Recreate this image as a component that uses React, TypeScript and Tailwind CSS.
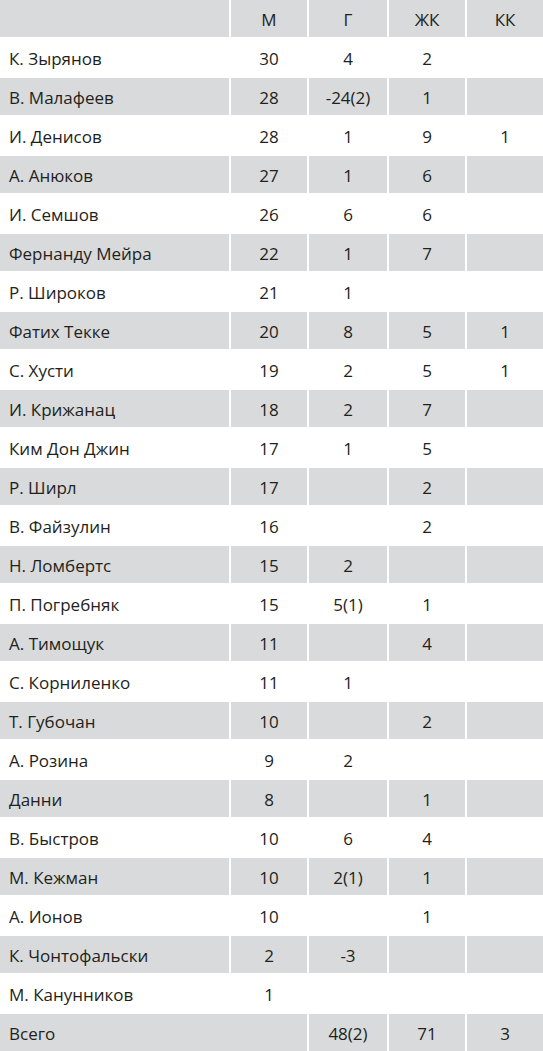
import React from 'react';

type Row = {
  name: string;
  m?: string;
  g?: string;
  yc?: string;
  rc?: string;
};

const players: Row[] = [
  { name: 'К. Зырянов', m: '30', g: '4', yc: '2' },
  { name: 'В. Малафеев', m: '28', g: '-24(2)', yc: '1' },
  { name: 'И. Денисов', m: '28', g: '1', yc: '9', rc: '1' },
  { name: 'А. Анюков', m: '27', g: '1', yc: '6' },
  { name: 'И. Семшов', m: '26', g: '6', yc: '6' },
  { name: 'Фернанду Мейра', m: '22', g: '1', yc: '7' },
  { name: 'Р. Широков', m: '21', g: '1' },
  { name: 'Фатих Текке', m: '20', g: '8', yc: '5', rc: '1' },
  { name: 'С. Хусти', m: '19', g: '2', yc: '5', rc: '1' },
  { name: 'И. Крижанац', m: '18', g: '2', yc: '7' },
  { name: 'Ким Дон Джин', m: '17', g: '1', yc: '5' },
  { name: 'Р. Ширл', m: '17', yc: '2' },
  { name: 'В. Файзулин', m: '16', yc: '2' },
  { name: 'Н. Ломбертс', m: '15', g: '2' },
  { name: 'П. Погребняк', m: '15', g: '5(1)', yc: '1' },
  { name: 'А. Тимощук', m: '11', yc: '4' },
  { name: 'С. Корниленко', m: '11', g: '1' },
  { name: 'Т. Губочан', m: '10', yc: '2' },
  { name: 'А. Розина', m: '9', g: '2' },
  { name: 'Данни', m: '8', yc: '1' },
  { name: 'В. Быстров', m: '10', g: '6', yc: '4' },
  { name: 'М. Кежман', m: '10', g: '2(1)', yc: '1' },
  { name: 'А. Ионов', m: '10', yc: '1' },
  { name: 'К. Чонтофальски', m: '2', g: '-3' },
  { name: 'М. Канунников', m: '1' },
];

const cell = 'h-[37px] pt-[2px] flex items-center justify-center';
const nameCell = 'h-[37px] pt-[2px] flex items-center pl-[9px]';

const App: React.FC = () => {
  return (
    <div
      className="w-[543px] bg-white text-[#231f20] text-[17px]"
      style={{ fontFamily: '"Open Sans", "Noto Sans", sans-serif' }}
    >
      <div className="grid grid-cols-[229px_76px_78px_76px_76px] gap-[2px]">
        {/* Header */}
        <div className={`${cell} bg-[#d9dadb]`}></div>
        <div className={`${cell} bg-[#d9dadb]`}>М</div>
        <div className={`${cell} bg-[#d9dadb]`}>Г</div>
        <div className={`${cell} bg-[#d9dadb]`}>ЖК</div>
        <div className={`${cell} bg-[#d9dadb]`}>КК</div>

        {players.map((p, i) => {
          const bg = i % 2 === 1 ? 'bg-[#d9dadb]' : 'bg-white';
          return (
            <React.Fragment key={p.name}>
              <div className={`${nameCell} ${bg}`}>{p.name}</div>
              <div className={`${cell} ${bg}`}>{p.m}</div>
              <div className={`${cell} ${bg}`}>{p.g}</div>
              <div className={`${cell} ${bg}`}>{p.yc}</div>
              <div className={`${cell} ${bg}`}>{p.rc}</div>
            </React.Fragment>
          );
        })}

        {/* Total */}
        <div className={`col-span-2 ${nameCell} bg-[#d9dadb]`}>Всего</div>
        <div className={`${cell} bg-[#d9dadb]`}>48(2)</div>
        <div className={`${cell} bg-[#d9dadb]`}>71</div>
        <div className={`${cell} bg-[#d9dadb]`}>3</div>
      </div>
    </div>
  );
};

export default App;
